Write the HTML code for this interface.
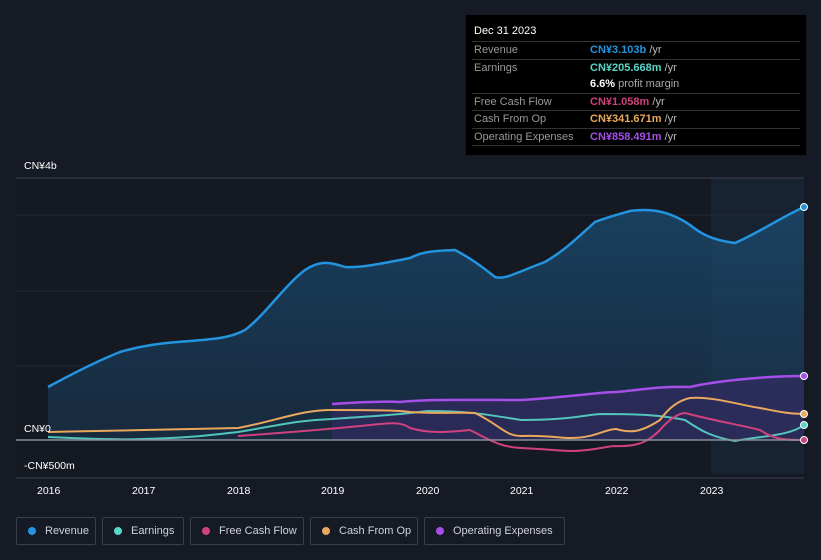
<!DOCTYPE html>
<html><head><meta charset="utf-8"><style>
html,body{margin:0;padding:0;background:#151a24;width:821px;height:560px;overflow:hidden;font-family:"Liberation Sans",sans-serif;}
.tt{position:absolute;left:466px;top:15px;width:340px;height:140px;background:#000;box-sizing:border-box;padding:0 6px;}
.tt .h{color:#fff;font-size:11px;padding:10px 2px 4px;}
.row{display:flex;border-top:1px solid #333;height:16.5px;align-items:center;font-size:11px;}
.row.nb{border-top:none}
.row .l{width:116px;color:#999;padding-left:2px}
.row .v b{font-weight:bold}
.lg{position:absolute;top:517px;height:28px;border:1px solid #3a3f4a;border-radius:2px;box-sizing:border-box;color:#cfd2d8;font-size:11px;display:flex;align-items:center;padding-left:11px;white-space:nowrap;overflow:hidden;}
.lg i{width:8px;height:8px;border-radius:50%;display:inline-block;margin-right:9px;flex:none;}
.ax{position:absolute;color:#fff;font-size:10.5px;}
</style></head><body>
<svg width="821" height="560" style="position:absolute;left:0;top:0">
<defs>
<linearGradient id="rg" x1="0" y1="0" x2="0" y2="1"><stop offset="0" stop-color="#1a4a6e" stop-opacity=".8"/><stop offset="1" stop-color="#1a3550" stop-opacity=".6"/></linearGradient>
</defs>
<rect x="16" y="178" width="788" height="296" fill="#141922"/>
<rect x="711" y="178" width="93" height="296" fill="#1a2838" opacity=".7"/>
<line x1="16" y1="178" x2="804" y2="178" stroke="#3a4050"/>
<line x1="16" y1="215" x2="804" y2="215" stroke="#242a35"/>
<line x1="16" y1="291" x2="804" y2="291" stroke="#242a35"/>
<line x1="16" y1="366" x2="804" y2="366" stroke="#242a35"/>
<path d="M48,387 C70,375 95,362 120,352 C140,346 160,343 190,341 C215,339 230,338 245,330 C265,315 285,285 305,270 C320,260 330,262 345,267 C360,268 380,264 410,258 C420,253 427,251 455,250 C470,258 480,265 495,277 C505,280 515,273 545,262 C565,250 575,240 595,222 C605,218 616,215 630,211 C645,209 665,208 690,225 C700,233 711,240 735,243 C760,232 780,218 804,207 L804,440 L48,440 Z" fill="url(#rg)"/>
<path d="M332,404 C360,402 380,401 400,402 C427,399 470,400 521,400 C570,397 600,392 616,392 C640,390 660,386 690,387 C711,382 760,376 804,376 L804,440 L332,440 Z" fill="#3a2a6a" opacity=".55"/>
<path d="M48,387 C70,375 95,362 120,352 C140,346 160,343 190,341 C215,339 230,338 245,330 C265,315 285,285 305,270 C320,260 330,262 345,267 C360,268 380,264 410,258 C420,253 427,251 455,250 C470,258 480,265 495,277 C505,280 515,273 545,262 C565,250 575,240 595,222 C605,218 616,215 630,211 C645,209 665,208 690,225 C700,233 711,240 735,243 C760,232 780,218 804,207" fill="none" stroke="#2394df" stroke-width="2.5"/>
<path d="M332,404 C360,402 380,401 400,402 C427,399 470,400 521,400 C570,397 600,392 616,392 C640,390 660,386 690,387 C711,382 760,376 804,376" fill="none" stroke="#a64ee8" stroke-width="2.5"/>
<path d="M48,437 C90,439 120,440 143,439 C190,438 210,435 238,432 C280,425 300,420 332,419 C370,416 400,415 427,411 C470,411 490,415 521,420 C570,420 585,415 600,414 C640,414 660,415 685,420 C700,430 711,437 735,441 C760,436 790,436 804,425" fill="none" stroke="#58d6c8" stroke-width="2" opacity=".9"/>
<path d="M238,436 C280,433 320,430 360,426 C390,423 400,421 410,428 C430,434 450,432 470,430 C490,440 500,447 521,448 C545,449 560,451 570,451 C595,451 605,446 616,446 C640,447 650,440 660,430 C670,418 680,413 685,413 C711,420 740,425 760,430 C775,440 785,440 804,440" fill="none" stroke="#d0417e" stroke-width="2"/>
<path d="M48,432 C100,431 143,430 238,428 C280,420 300,410 332,410 C360,410 400,410 410,412 C440,414 460,412 475,413 C500,425 505,436 521,436 C545,435 560,438 570,438 C595,438 605,429 616,429 C630,433 640,433 660,420 C670,406 680,400 690,398 C711,396 740,405 760,408 C780,412 790,414 804,414" fill="none" stroke="#e9a95c" stroke-width="2"/>
<line x1="16" y1="440" x2="804" y2="440" stroke="#8a8e96" stroke-width="1.5"/>
<line x1="16" y1="478" x2="804" y2="478" stroke="#3a4050"/>
<circle cx="804" cy="207" r="3.5" fill="#2394df" stroke="#fff" stroke-width="1"/>
<circle cx="804" cy="376" r="3.5" fill="#a64ee8" stroke="#fff" stroke-width="1"/>
<circle cx="804" cy="414" r="3.5" fill="#e9a95c" stroke="#fff" stroke-width="1"/>
<circle cx="804" cy="425" r="3.5" fill="#58d6c8" stroke="#fff" stroke-width="1"/>
<circle cx="804" cy="440" r="3.5" fill="#d0417e" stroke="#fff" stroke-width="1"/>
</svg>
<div class="ax" style="left:24px;top:160px">CN¥4b</div>
<div class="ax" style="left:24px;top:423px">CN¥0</div>
<div class="ax" style="left:24px;top:460px">-CN¥500m</div>
<div class="ax" style="left:37px;top:485px">2016</div>
<div class="ax" style="left:132px;top:485px">2017</div>
<div class="ax" style="left:227px;top:485px">2018</div>
<div class="ax" style="left:321px;top:485px">2019</div>
<div class="ax" style="left:416px;top:485px">2020</div>
<div class="ax" style="left:510px;top:485px">2021</div>
<div class="ax" style="left:605px;top:485px">2022</div>
<div class="ax" style="left:700px;top:485px">2023</div>
<div class="tt">
<div class="h">Dec 31 2023</div>
<div class="row"><span class="l">Revenue</span><span class="v"><b style="color:#2394df">CN¥3.103b</b> <span style="color:#bbb">/yr</span></span></div>
<div class="row"><span class="l">Earnings</span><span class="v"><b style="color:#58d6c8">CN¥205.668m</b> <span style="color:#bbb">/yr</span></span></div>
<div class="row nb"><span class="l"></span><span class="v"><b style="color:#fff">6.6%</b> <span style="color:#aaa">profit margin</span></span></div>
<div class="row"><span class="l">Free Cash Flow</span><span class="v"><b style="color:#d0417e">CN¥1.058m</b> <span style="color:#bbb">/yr</span></span></div>
<div class="row"><span class="l">Cash From Op</span><span class="v"><b style="color:#e9a95c">CN¥341.671m</b> <span style="color:#bbb">/yr</span></span></div>
<div class="row"><span class="l">Operating Expenses</span><span class="v"><b style="color:#a64ee8">CN¥858.491m</b> <span style="color:#bbb">/yr</span></span></div>
<div class="row" style="height:1px"></div>
</div>
<div class="lg" style="left:16px;width:80px"><i style="background:#2394df"></i>Revenue</div>
<div class="lg" style="left:102px;width:82px"><i style="background:#58d6c8"></i>Earnings</div>
<div class="lg" style="left:190px;width:114px"><i style="background:#d0417e"></i>Free Cash Flow</div>
<div class="lg" style="left:310px;width:108px"><i style="background:#e9a95c"></i>Cash From Op</div>
<div class="lg" style="left:424px;width:141px"><i style="background:#a64ee8"></i>Operating Expenses</div>
</body></html>
